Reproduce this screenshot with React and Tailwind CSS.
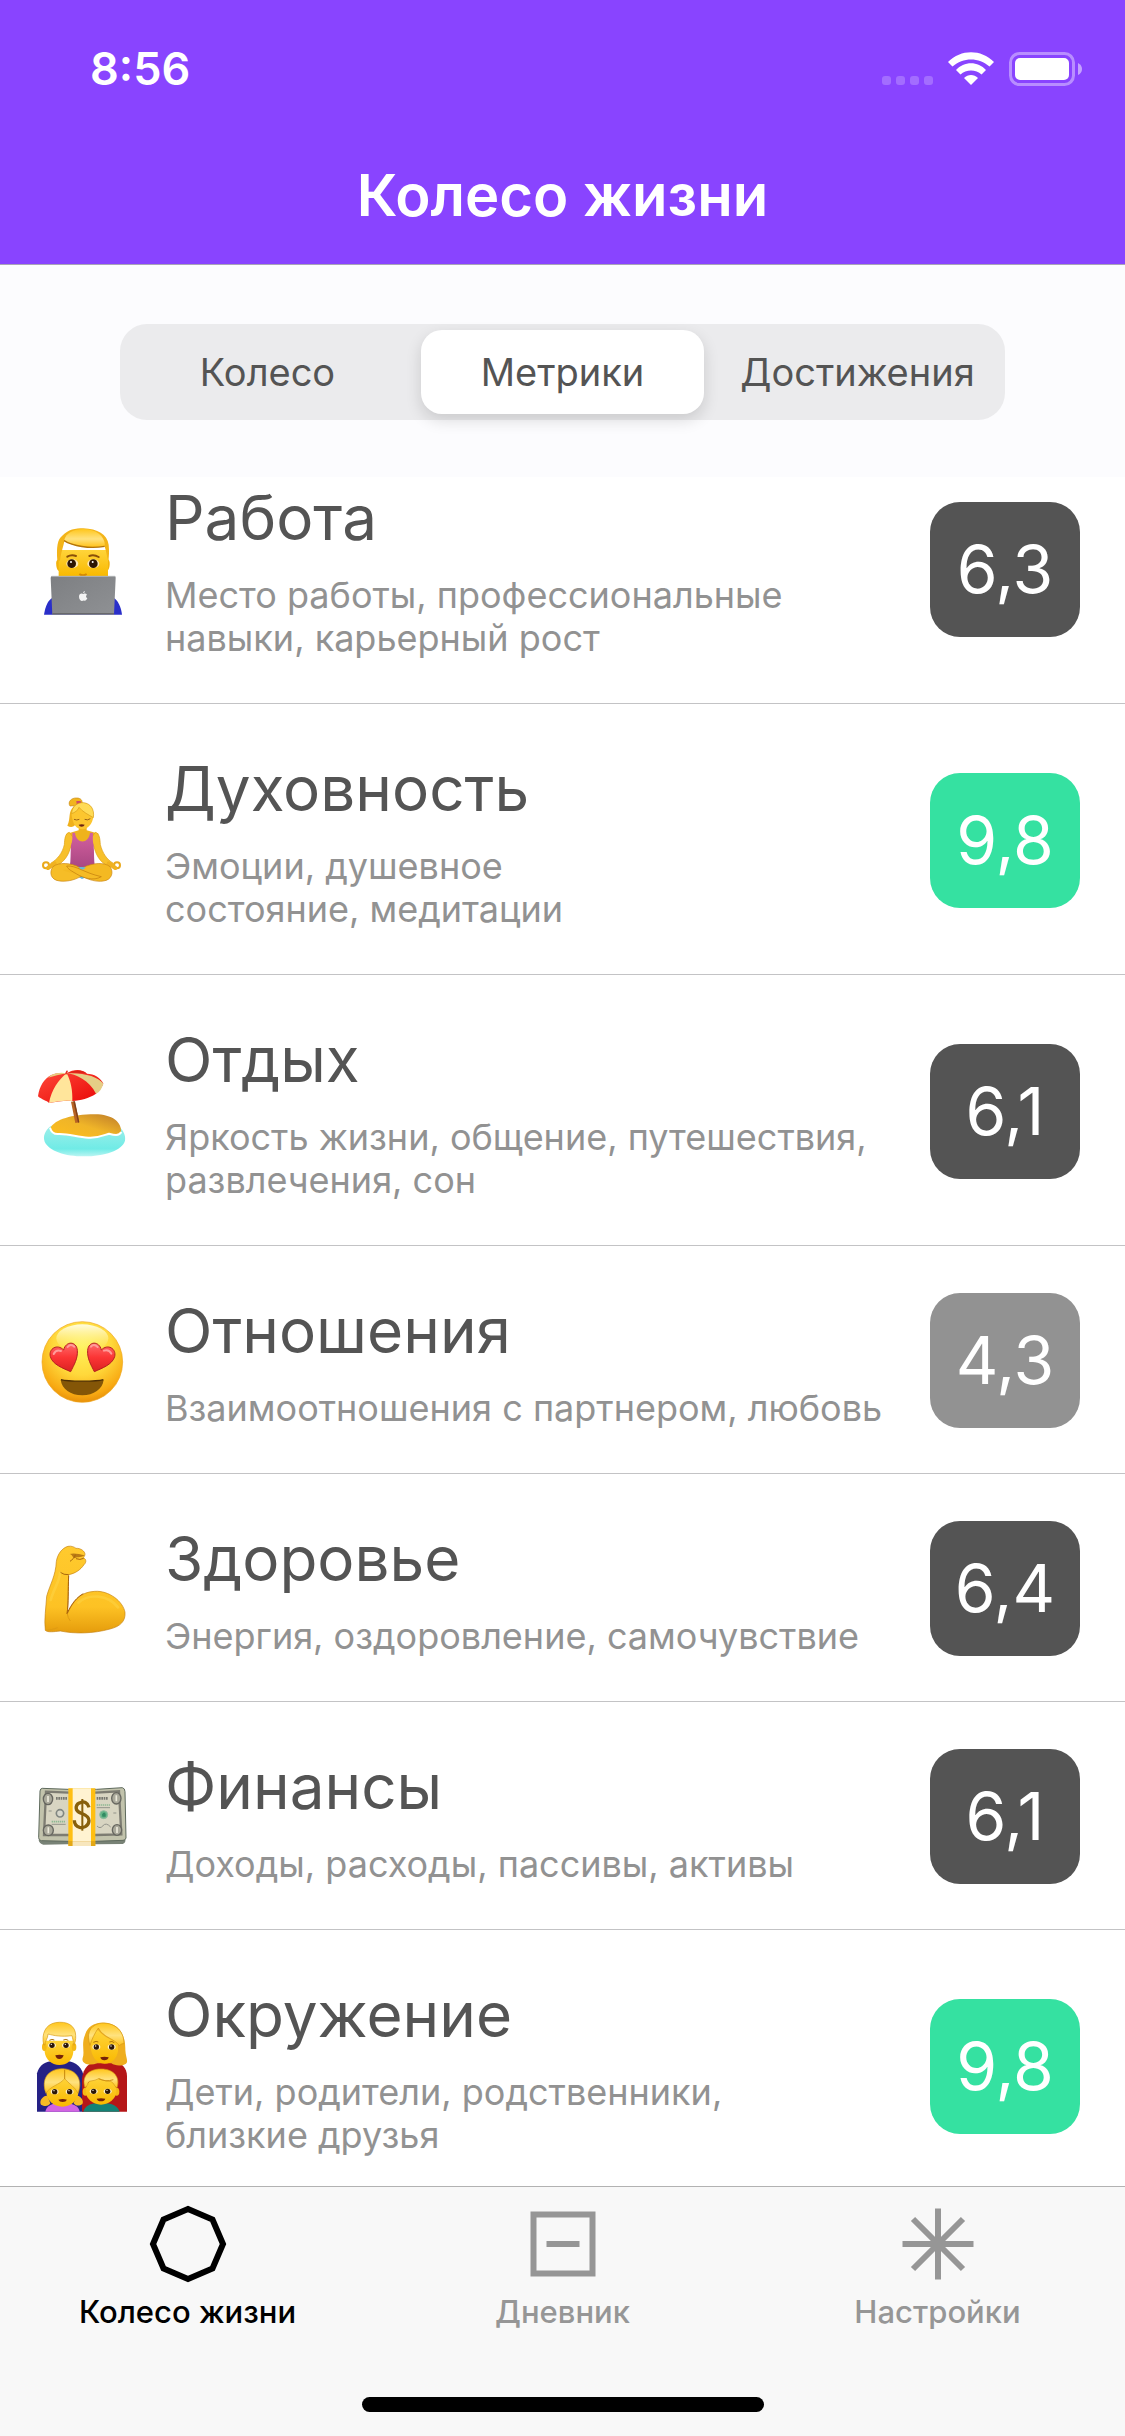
import React, { useState } from 'react';

const Heart = ({ d }) => (
  <path d={d} fill="url(#heart)" stroke="#b3201f" strokeWidth="3" />
);

const Technologist = () => (
  <svg viewBox="0 -3 390 360" className="w-[130px] h-[120px]" aria-hidden="true">
    <defs>
      <linearGradient id="hairTop" x1="0" y1="0" x2="0" y2="1">
        <stop offset="0" stopColor="#ffc61c" />
        <stop offset="0.55" stopColor="#ffe27e" />
        <stop offset="1" stopColor="#ffc21a" />
      </linearGradient>
      <linearGradient id="skin" x1="0" y1="0" x2="0" y2="1">
        <stop offset="0" stopColor="#ffd43a" />
        <stop offset="1" stopColor="#f9b900" />
      </linearGradient>
      <linearGradient id="laptop" x1="0" y1="0" x2="1" y2="1">
        <stop offset="0" stopColor="#7d7f82" />
        <stop offset="1" stopColor="#8f9194" />
      </linearGradient>
    </defs>
    <path d="M72 314 C76 288 84 270 98 263 L280 263 C294 270 303 290 306 314Z" fill="#2a2fc9" />
    <path d="M116 148 Q106 150 109 168 Q111 182 119 184 L260 184 Q268 180 269 164 Q270 150 263 148Z" fill="#f2b20c" />
    <path d="M116 120 H264 V198 H116Z" fill="url(#skin)" />
    <path d="M112 152 C109 110 113 88 126 78 C145 58 166 55 190 55 C232 56 262 74 266 104 C268 124 267 140 265 156 C261 138 258 122 254 109 C205 118 158 108 133 93 C130 112 124 122 120 152Z" fill="#f3b418" />
    <path d="M133 90 C136 71 161 57 190 57 C226 57 254 76 255 107 C210 116 160 110 133 90Z" fill="url(#hairTop)" />
    <path d="M132 92 C158 108 208 117 254 109" fill="none" stroke="#b47408" strokeWidth="4" />
    <path d="M142 140 Q154 133 168 138 M208 138 Q222 133 236 141" fill="none" stroke="#8b5008" strokeWidth="6" strokeLinecap="round" />
    <ellipse cx="157" cy="161" rx="18" ry="13" fill="#ffe9b5" />
    <ellipse cx="220" cy="161" rx="18" ry="13" fill="#ffe9b5" />
    <circle cx="155" cy="161" r="13" fill="#2e1604" />
    <circle cx="220" cy="161" r="13" fill="#2e1604" />
    <circle cx="153" cy="156" r="3" fill="#fff" />
    <circle cx="218" cy="156" r="3" fill="#fff" />
    <path d="M178 192 Q189 200 200 192" stroke="#d68a00" strokeWidth="6" fill="none" />
    <path d="M97 198 H283 Q288 198 287 204 L282 314 H97 L92 204 Q92 198 97 198Z" fill="url(#laptop)" />
    <path d="M95 199 H285" stroke="#b4b6b8" strokeWidth="3" />
    <path d="M97 311 H282" stroke="#68696b" strokeWidth="4" />
    <path d="M190 252 C184 248 177 252 177 260 C177 267 182 273 186 273 C189 273 190 271 193 272 C197 273 201 268 202 265 C197 262 197 256 201 254 C198 250 194 250 190 252Z M189 250 Q189 244 195 243 Q195 249 189 250Z" fill="#f4f4f4" />
  </svg>
);

const Lotus = () => (
  <svg viewBox="0 0 390 360" className="w-[130px] h-[120px]" aria-hidden="true">
    <defs>
      <linearGradient id="top" x1="0" y1="0" x2="0" y2="1">
        <stop offset="0" stopColor="#d4609f" />
        <stop offset="1" stopColor="#a94783" />
      </linearGradient>
    </defs>
    <path d="M177 135 H200 V151 L236 161 L218 190 H158 L138 162 L176 151Z" fill="#efb31c" />
    <path d="M148 157 C135 160 134 178 133 194 C127 220 112 238 92 250 L103 262 C126 250 143 234 151 204 L162 176Z" fill="#f7c02a" stroke="#dc9d10" strokeWidth="2" />
    <path d="M226 157 C239 160 240 178 241 194 C248 220 260 238 280 250 L269 262 C246 250 231 234 223 204 L212 176Z" fill="#f7c02a" stroke="#dc9d10" strokeWidth="2" />
    <path d="M157 158 H165 C168 192 206 194 210 158 H219 C218 174 218 184 221 196 C223 220 221 240 225 262 H149 C153 240 151 220 153 196 C157 184 158 174 157 158Z" fill="url(#top)" />
    <circle cx="78" cy="256" r="9" fill="none" stroke="#eaa91b" strokeWidth="6" />
    <circle cx="291" cy="256" r="9" fill="none" stroke="#eaa91b" strokeWidth="6" />
    <path d="M84 264 L104 250 M286 264 L266 250" stroke="#f0b220" strokeWidth="12" strokeLinecap="round" />
    <path d="M120 262 H252 V284 H120Z" fill="#f4b922" />
    <path d="M172 262 H200 L188 269Z M176 291 L186 286 L198 292 L186 297Z" fill="#62b9df" />
    <path d="M188 263 C220 248 253 246 270 260 C282 276 276 300 250 303 C229 306 206 300 188 289 C214 280 230 276 242 270Z" fill="#f4b922" />
    <path d="M188 263 C220 248 253 246 270 260 C282 276 276 300 250 303 C229 306 206 300 188 289" fill="none" stroke="#c98410" strokeWidth="2" />
    <path d="M180 263 C154 248 115 246 99 260 C87 276 91 300 119 303 C145 306 170 298 188 286 C160 280 141 276 128 270Z" fill="#f6bd27" />
    <path d="M180 263 C154 248 115 246 99 260 C87 276 91 300 119 303 C145 306 170 298 188 286" fill="none" stroke="#c98410" strokeWidth="2" />
    <path d="M140 258 C170 256 190 278 244 290 C220 304 190 294 170 282 C155 273 144 268 140 258Z" fill="#f5bb25" stroke="#c07a0c" strokeWidth="2" />
    <path d="M174 262 H198 L187 268Z" fill="#62b9df" />
    <path d="M150 78 C142 66 154 53 170 54 C183 54 188 62 186 71 L164 77Z" fill="#f2b51e" stroke="#c98a12" strokeWidth="2" />
    <path d="M169 63 L182 63 L185 71 L170 73Z" fill="#cf4b64" />
    <path d="M162 78 C142 98 154 112 142 137 C154 145 170 140 166 124Z" fill="#efb01b" />
    <path d="M154 98 C156 80 170 68 188 68 C211 69 223 86 220 109 C218 134 202 148 187 148 C170 147 157 134 154 98Z" fill="#fcc62f" />
    <path d="M155 101 C155 79 173 67 190 68 C212 70 224 88 220 113 C207 105 188 96 177 82 C175 91 163 98 155 101Z" fill="#ffdb55" stroke="#d79b16" strokeWidth="2" />
    <path d="M162 118 Q170 122 178 118 M194 118 Q203 122 211 116" fill="none" stroke="#99631b" strokeWidth="3" />
    <path d="M176 134 Q185 131 194 134 Q192 140 185 140 Q178 140 176 134Z" fill="#6d2412" />
  </svg>
);

const Beach = () => (
  <svg viewBox="0 0 390 360" className="w-[130px] h-[120px]" aria-hidden="true">
    <defs>
      <linearGradient id="sea" x1="0" y1="0" x2="0" y2="1">
        <stop offset="0" stopColor="#9defea" />
        <stop offset="0.75" stopColor="#70ebe6" />
        <stop offset="1" stopColor="#b9f5f2" />
      </linearGradient>
      <linearGradient id="sand" x1="0" y1="1" x2="1" y2="0">
        <stop offset="0" stopColor="#ffbf1c" />
        <stop offset="0.5" stopColor="#f0b528" />
        <stop offset="1" stopColor="#bd7b2a" />
      </linearGradient>
      <linearGradient id="red" x1="0" y1="0" x2="1" y2="1">
        <stop offset="0" stopColor="#ff4b3b" />
        <stop offset="1" stopColor="#e80505" />
      </linearGradient>
    </defs>
    <path d="M91 226 C75 240 68 256 74 272 C87 300 135 316 192 316 C253 316 307 298 315 269 C318 251 309 240 301 230Z" fill="url(#sea)" />
    <path d="M92 230 C95 245 102 251 116 251 C150 251 170 259 205 260 C234 262 250 254 267 249 C282 252 296 256 303 244 C306 214 278 190 224 190 C155 190 105 206 92 230Z" fill="url(#sand)" />
    <path d="M90 230 C94 245 102 250 116 249 C150 248 170 259 205 260 C234 262 250 253 267 248 C282 252 297 256 304 243" fill="none" stroke="#fff" strokeWidth="6" />
    <path d="M153 152 L164 151 L178 214 L166 216Z" fill="#b86424" />
    <path d="M160 151 L165 151 L178 214 L174 215Z" fill="#81401b" />
    <path d="M54 136 C58 106 72 83 94 72 C109 65 123 64 138 68 C164 52 187 55 201 68 C222 68 242 80 250 98 C243 113 235 117 228 128 C206 143 182 147 158 150 C130 148 109 154 87 156 C80 149 65 146 54 136Z" fill="url(#red)" />
    <path d="M140 67 C116 85 94 118 87 156 C109 151 132 147 157 150 C158 120 153 90 140 67Z" fill="#ffe59b" />
    <path d="M140 67 C166 68 209 89 228 128 C239 123 246 112 250 98 C236 77 190 64 140 67Z" fill="#e5ce86" />
    <path d="M143 66 C163 56 186 55 201 68 C181 64 160 65 143 66Z" fill="#dd2217" />
    <path d="M94 72 C109 65 125 64 140 67 C119 71 102 75 84 80Z" fill="#e8cd82" />
    <path d="M138 68 L141 61" stroke="#e53020" strokeWidth="5" strokeLinecap="round" />
  </svg>
);

const HeartEyes = () => (
  <svg viewBox="0 0 390 360" className="w-[130px] h-[120px]" aria-hidden="true">
    <defs>
      <radialGradient id="face" cx="0.5" cy="0.3" r="0.72">
        <stop offset="0" stopColor="#fff35a" />
        <stop offset="0.5" stopColor="#ffd83b" />
        <stop offset="0.85" stopColor="#f8a912" />
        <stop offset="1" stopColor="#e48b08" />
      </radialGradient>
      <linearGradient id="shine" x1="0" y1="0" x2="0" y2="1">
        <stop offset="0" stopColor="#fffce0" />
        <stop offset="1" stopColor="#fff27a" stopOpacity="0" />
      </linearGradient>
      <linearGradient id="heart" x1="0" y1="0" x2="0" y2="1">
        <stop offset="0" stopColor="#ff6b6b" />
        <stop offset="0.5" stopColor="#fb3535" />
        <stop offset="1" stopColor="#dc2222" />
      </linearGradient>
    </defs>
    <circle cx="187" cy="183" r="121" fill="url(#face)" stroke="#efa41b" strokeWidth="2" />
    <ellipse cx="187" cy="112" rx="78" ry="42" fill="url(#shine)" />
    <Heart d="M152 212 C130 202 98 191 91 167 C85 143 112 127 131 147 C137 119 170 120 172 148 C174 172 162 192 152 212Z" />
    <Heart d="M223 212 C245 202 277 191 284 167 C290 143 263 127 244 147 C238 119 205 120 203 148 C201 172 213 192 223 212Z" />
    <path d="M101 159 Q108 144 123 150 M143 138 Q151 127 163 137 M213 137 Q221 127 233 138 M252 149 Q267 144 274 158" fill="none" stroke="#ff9c9a" strokeWidth="6" strokeLinecap="round" />
    <path d="M122 236 C143 242 230 242 251 236 C248 265 221 282 187 283 C151 282 126 265 122 236Z" fill="#845607" />
    <path d="M123 236 C143 242 230 242 250 236" stroke="#4c2e04" strokeWidth="4" fill="none" />
  </svg>
);

const Biceps = () => (
  <svg viewBox="0 -6 390 360" className="w-[130px] h-[120px]" aria-hidden="true">
    <defs>
      <linearGradient id="arm" x1="0" y1="0" x2="0" y2="1">
        <stop offset="0" stopColor="#ffca2e" />
        <stop offset="0.7" stopColor="#fdc224" />
        <stop offset="1" stopColor="#e59c0c" />
      </linearGradient>
    </defs>
    <path d="M76 298 C72 265 78 230 80 196 C90 160 107 135 109 92 C112 70 126 51 144 46 C154 44 163 48 168 52 C182 51 195 61 195 70 C194 77 190 79 190 80 C199 84 200 94 192 101 C181 117 166 127 146 131 C144 165 145 214 142 248 C159 213 178 183 224 181 C267 178 309 211 315 244 C317 270 302 286 270 294 C220 308 165 309 121 300 C102 302 83 305 76 298Z" fill="url(#arm)" stroke="#c68412" strokeWidth="2" />
    <path d="M194 73 C180 82 169 77 165 82 C157 80 157 70 149 69 C158 65 178 68 194 73Z" fill="#b97b15" />
    <path d="M166 71 C164 80 157 86 150 91 M168 83 Q180 88 191 82 M146 131 Q131 132 121 124" stroke="#a8660c" strokeWidth="3" fill="none" />
    <path d="M146 134 C144 180 146 214 141 248 C155 217 171 198 190 188" stroke="#a9620a" strokeWidth="3" fill="none" />
    <path d="M77 298 C88 298 102 294 113 290 M142 248 Q143 260 151 270" stroke="#df9b12" strokeWidth="3" fill="none" />
    <path d="M92 207 C101 174 119 151 120 126 M175 215 C205 187 264 190 294 229" stroke="#ffe060" strokeOpacity="0.3" strokeWidth="8" strokeLinecap="round" fill="none" />
  </svg>
);

const Money = () => (
  <svg viewBox="0 -12 390 360" className="w-[130px] h-[120px]" aria-hidden="true">
    <path d="M58 235 H316 Q318 246 308 249 L228 250 H140 L70 251 Q58 248 56 238Z" fill="#788276" />
    <path d="M67 82 L145 85 H230 L307 80 Q315 82 315 92 L318 231 Q316 238 309 238 L225 241 H145 L64 239 Q56 238 56 230 L60 90 Q61 82 67 82Z" fill="#c2c3ac" stroke="#5e6a5d" strokeWidth="3" />
    <path d="M78 92 L145 95 H228 L297 91 L304 220 L226 222 H146 L72 222Z" fill="#d8d5c2" stroke="#7d7c72" strokeWidth="7" />
    <g fill="#aaa99b" stroke="#66665f" strokeWidth="4">
      <ellipse cx="84" cy="114" rx="14" ry="17" />
      <ellipse cx="85" cy="208" rx="15" ry="16" />
      <ellipse cx="289" cy="112" rx="14" ry="17" />
      <ellipse cx="291" cy="207" rx="14" ry="16" />
    </g>
    <path d="M84 105 V123 M85 199 V217 M289 103 V121 M291 198 V216" stroke="#eceadb" strokeWidth="5" />
    <path d="M108 112 H143 M230 112 H264" stroke="#777770" strokeWidth="8" strokeDasharray="5 2" />
    <path d="M95 182 H136 M230 132 H272" stroke="#8eb993" strokeWidth="5" strokeDasharray="4 2" />
    <path d="M95 190 H137 M230 140 H270 M231 195 Q240 205 249 194 T272 198 M86 150 H95 M280 156 H289" stroke="#92938a" strokeWidth="3" fill="none" />
    <circle cx="120" cy="157" r="11" fill="#d7d7cc" stroke="#818782" strokeWidth="5" />
    <circle cx="251" cy="161" r="12" fill="#65b487" stroke="#91bba0" strokeWidth="3" />
    <path d="M246 160 Q253 149 257 159 V167 H247Z" fill="#328b63" />
    <path d="M145 82 H226 V255 H145Z" fill="#ffbf12" />
    <path d="M158 82 H213 V255 H158Z" fill="#fff3d1" />
    <path d="M145 240 H226 V255 H145Z" fill="#d29a18" opacity="0.6" />
    <path d="M158 241 H213 V255 H158Z" fill="#f7e6bd" />
    <path d="M207 139 C203 124 190 121 184 124 C166 127 164 145 176 153 C185 159 207 161 207 179 C206 198 188 201 179 199 C167 196 163 187 163 178" fill="none" stroke="#88600b" strokeWidth="10" />
    <path d="M187 114 V209" stroke="#88600b" strokeWidth="6" />
  </svg>
);

const Eyes = ({ a, b, y }) => (
  <g>
    <ellipse cx={a} cy={y} rx="12" ry="8" fill="#fff0c6" />
    <ellipse cx={b} cy={y} rx="12" ry="8" fill="#fff0c6" />
    <circle cx={a} cy={y} r="8" fill="#2c1707" />
    <circle cx={b} cy={y} r="8" fill="#2c1707" />
    <circle cx={a - 2} cy={y - 3} r="2" fill="#fff" />
    <circle cx={b - 2} cy={y - 3} r="2" fill="#fff" />
  </g>
);

const Family = () => (
  <svg viewBox="0 -12 390 360" className="w-[130px] h-[120px]" aria-hidden="true">
    <path d="M51 305 V190 C57 165 77 153 102 153 H140 C168 154 190 174 192 207 V305Z" fill="#252185" />
    <path d="M186 305 V205 C190 174 207 155 238 153 H280 C304 156 321 175 321 198 V305Z" fill="#b51618" />
    <path d="M74 92 H160 V125 C158 151 140 165 118 165 C95 164 76 148 74 125Z" fill="url(#skin)" />
    <ellipse cx="73" cy="111" rx="7" ry="12" fill="#f5b916" />
    <ellipse cx="162" cy="111" rx="7" ry="12" fill="#f5b916" />
    <path d="M71 105 C64 71 76 44 106 38 C142 32 167 47 167 77 C168 88 165 99 162 106 C160 93 158 86 156 77 C123 81 102 77 84 72 C83 88 76 91 74 105Z" fill="url(#hairTop)" stroke="#d89b14" strokeWidth="2" />
    <Eyes a={96} b={138} y={106} />
    <path d="M88 91 Q96 86 103 90 M130 90 Q138 86 145 91" stroke="#ad7208" strokeWidth="3" fill="none" />
    <path d="M106 136 Q118 132 131 136 Q128 147 118 147 Q108 147 106 136Z" fill="#742309" />
    <path d="M188 144 C195 124 183 103 195 75 C203 45 230 35 259 39 C300 43 317 78 316 120 C317 142 326 154 318 161 C306 169 285 168 274 160 H232 C210 168 183 163 188 144Z" fill="#efae1d" />
    <path d="M211 103 C211 78 220 62 234 60 C250 82 280 91 294 98 V123 C291 146 275 161 254 161 C230 160 213 142 211 103Z" fill="url(#skin)" />
    <path d="M210 106 C199 75 207 48 238 40 C279 34 312 59 312 101 C308 100 302 103 298 107 C284 86 250 83 235 54 C223 72 216 86 210 106Z" fill="url(#hairTop)" stroke="#d39613" strokeWidth="2" />
    <Eyes a={229} b={275} y={111} />
    <path d="M220 97 Q229 92 235 96 M268 96 Q276 92 283 98" stroke="#ad7208" strokeWidth="3" fill="none" />
    <path d="M241 142 Q253 138 266 142 Q264 151 253 151 Q243 151 241 142Z" fill="#742309" />
    <path d="M76 305 C79 289 96 280 113 280 H142 C164 282 177 291 179 305Z" fill="#d264e2" />
    <path d="M75 258 C64 263 58 275 63 284 C76 292 87 287 91 280 L82 257Z M176 258 C185 263 192 274 187 282 C176 291 164 286 161 279 L170 257Z" fill="#f7ba25" />
    <ellipse cx="127" cy="245" rx="48" ry="45" fill="url(#skin)" />
    <path d="M78 250 C62 207 84 177 127 176 C170 178 190 210 174 250 C166 231 145 220 134 206 C120 224 89 229 78 250Z" fill="url(#hairTop)" stroke="#d59b16" strokeWidth="2" />
    <path d="M134 179 V207" stroke="#c5860d" strokeWidth="3" />
    <Eyes a={104} b={149} y={245} />
    <path d="M115 269 Q128 265 141 269 Q138 276 128 276 Q118 276 115 269Z" fill="#742309" />
    <path d="M190 305 C195 288 211 281 227 280 H258 C280 281 294 291 299 305Z" fill="#148276" />
    <ellipse cx="196" cy="245" rx="8" ry="12" fill="#f5b916" />
    <ellipse cx="290" cy="245" rx="8" ry="12" fill="#f5b916" />
    <ellipse cx="243" cy="242" rx="46" ry="42" fill="url(#skin)" />
    <path d="M195 233 C184 198 207 177 243 177 C283 177 301 203 291 233 C282 230 284 219 271 214 C254 214 246 208 236 206 C220 215 209 210 204 218 C204 227 199 229 195 233Z" fill="url(#hairTop)" stroke="#d59b16" strokeWidth="2" />
    <path d="M236 206 Q257 217 280 209" stroke="#d09213" strokeWidth="3" fill="none" />
    <Eyes a={221} b={263} y={244} />
    <path d="M230 266 Q243 263 256 266 Q253 274 243 274 Q233 274 230 266Z" fill="#742309" />
  </svg>
);

const metrics = [
  { name: 'Работа', text: 'Место работы, профессиональные\nнавыки, карьерный рост', score: '6,3', tone: 'bg-[#545454]', Icon: Technologist },
  { name: 'Духовность', text: 'Эмоции, душевное\nсостояние, медитации', score: '9,8', tone: 'bg-[#35e1a1]', Icon: Lotus },
  { name: 'Отдых', text: 'Яркость жизни, общение, путешествия,\nразвлечения, сон', score: '6,1', tone: 'bg-[#545454]', Icon: Beach },
  { name: 'Отношения', text: 'Взаимоотношения с партнером, любовь', score: '4,3', tone: 'bg-[#929292]', Icon: HeartEyes },
  { name: 'Здоровье', text: 'Энергия, оздоровление, самочувствие', score: '6,4', tone: 'bg-[#545454]', Icon: Biceps },
  { name: 'Финансы', text: 'Доходы, расходы, пассивы, активы', score: '6,1', tone: 'bg-[#545454]', Icon: Money },
  { name: 'Окружение', text: 'Дети, родители, родственники,\nблизкие друзья', score: '9,8', tone: 'bg-[#35e1a1]', Icon: Family },
];

function StatusBar() {
  return (
    <div className="flex h-[138px] items-center justify-between pl-[90px] pr-[43px]">
      <time className="text-[45px] leading-[54px] font-semibold">8:56</time>
      <svg viewBox="0 0 200 34" className="h-[34px] w-[200px]" aria-hidden="true">
        <g fill="#fff" fillOpacity="0.22">
          <rect x="0" y="24" width="9" height="9" rx="3" />
          <rect x="14" y="24" width="9" height="9" rx="3" />
          <rect x="28" y="24" width="9" height="9" rx="3" />
          <rect x="42" y="24" width="9" height="9" rx="3" />
        </g>
        <g fill="#fff">
          <path d="M66 10 C79 -3 99 -3 112 10 L107.500 14.500 C97 5 81 5 70.500 14.500Z" />
          <path d="M74 18 C82 9 96 9 104 18 L99.500 22.500 C94 17 84 17 78.500 22.500Z" />
          <path d="M82 26 C86 22 92 22 96 26 L89 33Z" />
        </g>
        <rect x="128.500" y="1.500" width="63" height="31" rx="9" fill="none" stroke="#fff" strokeOpacity="0.4" strokeWidth="3" />
        <rect x="133" y="6" width="54" height="22" rx="5" fill="#fff" />
        <path d="M196 11 Q200 13 200 17 Q200 21 196 23Z" fill="#fff" fillOpacity="0.5" />
      </svg>
    </div>
  );
}

function Segments() {
  const [active, setActive] = useState('Метрики');
  return (
    <div className="mx-[120px] grid h-24 grid-cols-3 rounded-[27px] bg-[#ebebed] py-1.5">
      {['Колесо', 'Метрики', 'Достижения'].map((s) => (
        <button
          key={s}
          type="button"
          onClick={() => setActive(s)}
          aria-pressed={s === active}
          className={
            s === active
              ? 'mx-1.5 rounded-[21px] bg-white text-[38px] shadow-[0_6px_16px_rgba(0,0,0,0.14)]'
              : 'mx-1.5 rounded-[21px] text-[38px]'
          }
        >
          {s}
        </button>
      ))}
    </div>
  );
}

function MetricRow({ name, text, score, tone, Icon }) {
  return (
    <li className="flex items-center border-b border-[#c3c3c5] pt-[45px] pr-[45px] pb-[43px] pl-5 first:-mt-11">
      <Icon />
      <div className="min-w-0 flex-1 pl-[15px]">
        <h2 className="text-[62px] leading-[80px] whitespace-nowrap text-[#545454]">{name}</h2>
        <p className="mt-4 text-[36px] leading-[43px] whitespace-pre text-[#929292]">{text}</p>
      </div>
      <div className={`flex h-[135px] w-[150px] shrink-0 items-center justify-center rounded-[30px] text-[66px] text-white ${tone}`}>
        {score}
      </div>
    </li>
  );
}

const tabs = [
  {
    label: 'Колесо жизни',
    tone: 'text-black',
    icon: <path d="M40 5 L64.500 15.500 L75 40 L64.500 64.500 L40 75 L15.500 64.500 L5 40 L15.500 15.500Z" />,
  },
  {
    label: 'Дневник',
    tone: 'text-[#969696]',
    icon: <path d="M10.500 10.500 H69.500 V69.500 H10.500Z M23.500 40 H56.500" />,
  },
  {
    label: 'Настройки',
    tone: 'text-[#969696]',
    icon: <path d="M40 4.500 V75.500 M4.500 40 H75.500 M15 15 L65 65 M65 15 L15 65" />,
  },
];

export default function App() {
  return (
    <div className="flex h-screen flex-col overflow-hidden bg-white font-['Inter','Liberation_Sans',sans-serif] text-[#545454]">
      <header className="shrink-0 border-b border-[#a9a3b8] bg-[#8944ff] text-white">
        <StatusBar />
        <h1 className="h-[126px] text-center text-[58px] leading-[114px] font-semibold">Колесо жизни</h1>
      </header>
      <div className="shrink-0 bg-[#fcfcfe] pt-[59px] pb-[57px]">
        <Segments />
      </div>
      <main className="min-h-0 flex-1 overflow-hidden">
        <ul className="flex flex-col">
          {metrics.map((m) => (
            <MetricRow key={m.name} {...m} />
          ))}
        </ul>
      </main>
      <nav className="shrink-0 border-t border-[#b2b2b2] bg-[#f8f8f8] pt-[17px] pb-6">
        <div className="grid grid-cols-3">
          {tabs.map((t) => (
            <a key={t.label} href="#" className={`flex flex-col items-center ${t.tone}`}>
              <svg viewBox="0 0 80 80" className="h-20 w-20" fill="none" stroke="currentColor" strokeWidth="6" aria-hidden="true">
                {t.icon}
              </svg>
              <span className="mt-2.5 text-[31px] leading-[36px] font-medium">{t.label}</span>
            </a>
          ))}
        </div>
        <div className="mx-auto mt-[67px] h-[15px] w-[402px] rounded-full bg-black" />
      </nav>
    </div>
  );
}
